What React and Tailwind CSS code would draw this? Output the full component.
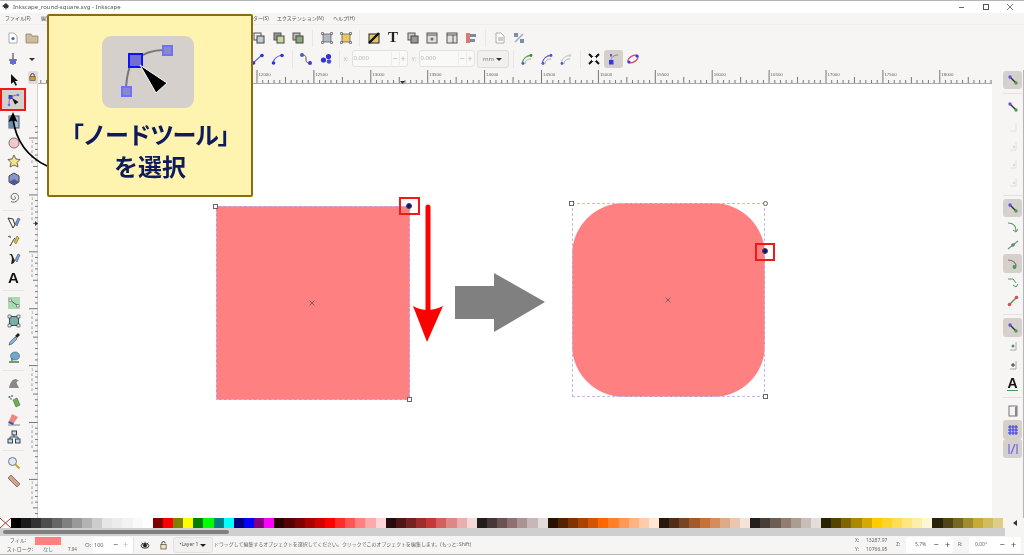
import React from "react";

const S = ({ children, vb = "0 0 14 14", size = "w-[14px] h-[14px]" }) => (
  <svg viewBox={vb} className={size}>{children}</svg>
);
const Snap = ({ a = "#5a5ae0", b = "#4a9a5a", l = "#333" }) => (
  <S>
    <path d="M4 4L10 10" stroke={l} strokeWidth="1.4" />
    <circle cx="4" cy="4" r="1.7" fill={a} />
    <circle cx="10" cy="10" r="1.7" fill={b} />
  </S>
);
const Page = ({ children }) => (
  <S>
    <path d="M3 2h5l3 3v7H3z" fill="#fff" stroke="#999" strokeWidth=".8" />
    {children}
  </S>
);
const Stack = ({ c = "#8a8a8a", d = "#d0d0c0" }) => (
  <S>
    <rect x="2" y="2" width="7" height="7" fill={d} stroke="#555" />
    <rect x="5" y="5" width="7" height="7" fill={c} stroke="#444" />
  </S>
);
const Bbox = ({ f = "#b0b8c0" }) => (
  <S>
    <rect x="3" y="3" width="8" height="8" fill={f} stroke="#555" strokeWidth=".7" />
    <path d="M1.5 1.5h2v2h-2zM10.5 1.5h2v2h-2zM1.5 10.5h2v2h-2zM10.5 10.5h2v2h-2z" fill="#fff" stroke="#444" strokeWidth=".6" />
  </S>
);
const NodeSeg = ({ curve }) => (
  <S>
    <path d={curve ? "M2 11C3 6 6 4 11 3" : "M2 11L11 3"} stroke="#5a6ac0" strokeWidth="1.2" fill="none" />
    <circle cx="2.5" cy="11" r="1.8" fill="#3030e0" />
    <circle cx="11" cy="3.5" r="1.8" fill="#3030e0" />
  </S>
);
const Path3 = ({ c = "#59a85a", e = "#3a8a3a" }) => (
  <S>
    <path d="M2 12C3 6 6 4 12 3" stroke={c} strokeWidth="1.3" fill="none" />
    <path d="M5 12C5 9 7 7 11 7" stroke="#aaa" strokeWidth="1" fill="none" />
    <circle cx="11" cy="3.5" r="1.4" fill={e} />
    <circle cx="3" cy="11.5" r="1.4" fill="#4a60d0" />
  </S>
);
const Faded = ({ plus }) => (
  <S>
    <path d="M10 3v8H4" stroke="#dde3de" strokeWidth="1" fill="none" />
    {plus && <circle cx="8" cy="8" r="1.2" fill="#cfe0d4" />}
  </S>
);

const Cell = ({ children, active }) => (
  <div className={`w-[19.5px] h-[18px] flex items-center justify-center rounded-[3px] ${active ? "bg-[#d5d0cc]" : ""}`}>{children}</div>
);
const Sep = ({ w }) => (
  <div className={`${w} h-[18px] flex justify-center`}><div className="w-px h-full bg-[#e8e7e5]" /></div>
);
const Spin = ({ value, w = "w-[56px]", light = true, numW = "w-[38px]" }) => (
  <div className={`${w} h-[17px] bg-[#f9f9f8] border border-[#e2e1df] rounded-[3px] flex items-center text-[6px] ${light ? "text-[#b8b8b8]" : "text-[#555]"}`}>
    <span className={`${numW} pl-[1px]`}>{value}</span>
    <span className="flex-1 text-center text-[9px] border-l border-[#ececea]">−</span>
    <span className="flex-1 text-center text-[9px] border-l border-[#ececea]">+</span>
  </div>
);

const gray = ["#000000","#1a1a1a","#333333","#4d4d4d","#666666","#808080","#999999","#b3b3b3","#cccccc","#e6e6e6","#ececec","#f2f2f2","#f9f9f9","#ffffff"];
const base = ["#800000","#ff0000","#808000","#ffff00","#008000","#00ff00","#008080","#00ffff","#000080","#0000ff","#800080","#ff00ff"];
const shades = ["#2b0000","#550000","#800000","#aa0000","#d40000","#ff0000","#ff2a2a","#ff5555","#ff8080","#ffaaaa","#ffd5d5","#280b0b","#501616","#782121","#a02c2c","#c83737","#d35f5f","#de8787","#e9afaf","#f4d7d7","#241c1c","#483737","#6c5353","#916f6f","#ac9393","#c8b7b7","#e3dbdb","#2b1100","#552200","#803300","#aa4400","#d45500","#ff6600","#ff7f2a","#ff9955","#ffb380","#ffccaa","#ffe6d5","#28170b","#502d16","#784421","#a05a2c","#c87137","#d38d5f","#deaa87","#e9c6af","#f4e3d7","#241f1c","#483e37","#6c5d53","#917c6f","#ac9d93","#c8beb7","#e3dedb","#2b2200","#554400","#806600","#aa8800","#d4aa00","#ffcc00","#ffd42a","#ffdd55","#ffe680","#ffeeaa","#fff6d5","#28220b","#504416","#786721","#a08d2c","#c8ab37","#d3bc5f","#decd87"];
const palette = [...gray, ...base, ...shades];

function HRuler() {
  const ticks = [];
  for (let k = -39; k <= 129; k++) {
    const x = 219 + k * 5.69;
    if (x < 0) continue;
    const maj = k % 10 === 0, mid = k % 5 === 0;
    ticks.push(<line key={k} x1={x} x2={x} y1={maj ? 0 : mid ? 7 : 10} y2="13" stroke="#555" strokeWidth=".8" />);
    if (maj) ticks.push(<text key={"t" + k} x={x + 1.5} y="6" fontSize="4.4" fill="#666" fontFamily="Liberation Sans, sans-serif">{12000 + k * 50}</text>);
  }
  return (
    <svg viewBox="0 0 954 14" className="w-[954px] h-[14px] block">
      {ticks}
      <line x1="0" x2="954" y1="13.5" y2="13.5" stroke="#aaa" strokeWidth="1" />
      <path d="M362 11h5l-2.5 3z" fill="#333" />
    </svg>
  );
}
function VRuler() {
  const ticks = [];
  for (let k = -2; k <= 66; k++) {
    const y = 54 + k * 5.69;
    const maj = k % 10 === 0, mid = k % 5 === 0;
    ticks.push(<line key={k} y1={y} y2={y} x1={maj ? 2 : mid ? 6 : 8} x2="11" stroke="#555" strokeWidth=".8" />);
    if (maj && y + 30 < 434) [0, 1, 2, 3, 4].forEach((i) =>
      ticks.push(<text key={"t" + k + i} x="4" y={y + 5 + i * 5} fontSize="4" fill="#888" fontFamily="Liberation Sans, sans-serif">{i === 0 ? "1" : "0"}</text>)
    );
  }
  return (
    <svg viewBox="0 0 11 434" className="w-[11px] h-[434px] block">
      {ticks}
      <line x1="11" x2="11" y1="0" y2="434" stroke="#aaa" strokeWidth="1" />
      <path d="M8 137v5l3-2.5z" fill="#333" />
    </svg>
  );
}

const leftTools = [
  ["h-[17px]", <S><path d="M4 1l7 7H8l2 4-1.5.7L6.5 9 4 11z" fill="#111" /></S>],
  ["node"],
  ["h-[22px]", <S><rect x="2" y="1" width="10" height="12" fill="#a9c1d6" stroke="#456" /><rect x="2" y="1" width="4" height="12" fill="#5f8fb5" /></S>],
  ["h-[19px]", <S><circle cx="7" cy="7" r="5" fill="#f7c6cc" stroke="#777" /></S>],
  ["h-[18px]", <S><path d="M7 1l2 4 4 .5-3 3 1 4.5-4-2-4 2 1-4.5-3-3L5 5z" fill="#f4e28a" stroke="#665" /></S>],
  ["h-[18px]", <S><path d="M7 1l5 3v6l-5 3-5-3V4z" fill="#8b96c8" stroke="#445" /><path d="M7 7l5 3-5 3-5-3z" fill="#4c5a9a" /></S>],
  ["h-[18px]", <S><path d="M7 7c.8-.8 2 .3 1.4 1.6-.8 1.5-3.6 1.2-4.2-.8C3.6 5 6 2.8 8.8 3.6c3 .9 3.6 4.6 1.6 6.8-1.6 1.8-4.2 2.2-6.4 1.2" fill="none" stroke="#666" strokeWidth="1" /></S>],
  ["sep"],
  ["h-[18px]", <S><path d="M1 2l5 1 2 6-2 3z" fill="none" stroke="#333" /><path d="M8 8l3-6 2 1-3 7z" fill="#6a9ad0" stroke="#345" strokeWidth=".5" /></S>],
  ["h-[18px]", <S><path d="M1 3c2-2 3 0 2 1" fill="none" stroke="#333" /><path d="M3 12c2-3 3-6 5-8" fill="none" stroke="#333" /><path d="M7 8l3-6 2 2-3 6z" fill="#e8b830" stroke="#553" strokeWidth=".5" /></S>],
  ["h-[18px]", <S><path d="M2 2c4 2 3 6 2 10 2 0 3-1 4-3L5 2z" fill="#222" /><path d="M8 8l3-6 2 1-3 7z" fill="#7aa0d0" stroke="#345" strokeWidth=".5" /></S>],
  ["h-[18px]", <span className="font-['Liberation_Sans'] font-bold text-[15px] leading-none text-[#111]">A</span>],
  ["sep"],
  ["h-[18px]", <S><rect x="1" y="1" width="12" height="12" fill="#a8dcb0" /><path d="M3 4l8 6" stroke="#555" /><rect x="2" y="3" width="2.5" height="2.5" fill="#fff" stroke="#555" strokeWidth=".5" /><rect x="9.5" y="8.5" width="2.5" height="2.5" fill="#fff" stroke="#555" strokeWidth=".5" /></S>],
  ["h-[18px]", <S><rect x="2.5" y="2.5" width="9" height="9" fill="#79b0a5" stroke="#355" /><path d="M1 1h3v3H1zM10 1h3v3h-3zM1 10h3v3H1zM10 10h3v3h-3z" fill="#eee" stroke="#333" strokeWidth=".6" /></S>],
  ["h-[18px]", <S><path d="M2 13l1-3 5-5 2 2-5 5z" fill="#8fb4d8" stroke="#345" strokeWidth=".6" /><path d="M8 4l3-3 2 2-3 3z" fill="#222" /></S>],
  ["h-[18px]", <S><ellipse cx="8" cy="6" rx="4.5" ry="4" fill="#6fa8d0" stroke="#456" strokeWidth=".6" /><path d="M2 12h10M5 8v3" stroke="#4a7a50" strokeWidth="1.4" /></S>],
  ["sep"],
  ["h-[18px]", <S><path d="M2 12c1-5 3-9 7-9l3 2c-2 0-3 1-2 3l2 4z" fill="#888" /></S>],
  ["h-[18px]", <S><path d="M6 6l4-2 3 7-4 2z" fill="#6bb04f" stroke="#354" strokeWidth=".5" /><circle cx="2.5" cy="3" r="1" fill="#557" /><circle cx="5" cy="2" r="1" fill="#77a" /><circle cx="4" cy="5" r="1" fill="#7a7" /></S>],
  ["h-[18px]", <S><path d="M5 2l6 3-4 6-5-2z" fill="#f0877c" /><path d="M2 9l5 2-1 2-5-2z" fill="#3a50d0" /><path d="M1 13h12" stroke="#333" strokeWidth=".6" /></S>],
  ["h-[18px]", <S><rect x="5" y="1" width="4.5" height="4" fill="#cfd6e4" stroke="#345" /><rect x="1" y="9" width="4.5" height="4" fill="#cfd6e4" stroke="#345" /><rect x="8.5" y="9" width="4.5" height="4" fill="#cfd6e4" stroke="#345" /><path d="M7 5v2M3 9V7h8v2" stroke="#345" fill="none" /></S>],
  ["sep"],
  ["h-[18px]", <S><circle cx="5.5" cy="5.5" r="4" fill="#dce8f2" stroke="#678" /><path d="M8.5 8.5l4 4" stroke="#d8a030" strokeWidth="2" /></S>],
  ["h-[18px]", <S><path d="M4 1l9 9-3 3-9-9z" fill="#d9a08f" stroke="#555" strokeWidth=".7" /></S>],
];

const rightTools = [
  ["h-[18px]", <Snap />, true],
  ["rsep"],
  ["h-[20px]", <Snap />],
  ["h-[19px]", <Faded />],
  ["h-[19px]", <Faded plus />],
  ["h-[18px]", <Faded plus />],
  ["h-[18px]", <Faded plus />],
  ["rsep2"],
  ["h-[18px]", <Snap />, true],
  ["h-[19px]", <S><path d="M2 3c5 0 8 3 8 8" stroke="#4a9a5a" fill="none" strokeWidth="1.2" /><path d="M7 10l3 2 2-3" fill="none" stroke="#4a9a5a" /></S>],
  ["h-[18px]", <S><path d="M2 11L12 3" stroke="#888" strokeWidth="1.2" /><circle cx="7" cy="7" r="1.8" fill="#4a9a5a" /></S>],
  ["h-[19px]", <S><path d="M2 3c5 0 8 3 8 6" stroke="#777" fill="none" strokeWidth="1.2" /><circle cx="8.5" cy="10" r="2" fill="#4a9a5a" /></S>, true],
  ["h-[19px]", <S><path d="M2 3h5l3 4M7 9l3 2 2-3" stroke="#4a9a5a" fill="none" /></S>],
  ["h-[18px]", <S><path d="M3 11L11 3" stroke="#6b8a5a" strokeWidth="1.4" /><circle cx="3.5" cy="10.5" r="1.8" fill="#d85050" /><circle cx="10.5" cy="3.5" r="1.8" fill="#d85050" /></S>],
  ["rsep3"],
  ["h-[19px]", <Snap />, true],
  ["h-[18px]", <S><path d="M10 3v8H4" stroke="#aaa" fill="none" /><circle cx="7" cy="7" r="1.5" fill="#4a9a5a" /></S>],
  ["h-[19px]", <S><path d="M10 3v8H4" stroke="#aaa" fill="none" /><path d="M5 7h4M7 5v4" stroke="#333" /></S>],
  ["h-[19px]", <span className="font-['Liberation_Sans'] font-bold text-[14px] leading-none text-[#111] border-b border-[#4a9a5a]">A</span>],
  ["rsep4"],
  ["h-[19px]", <S><rect x="3" y="2" width="8" height="10" fill="#f4f4f4" stroke="#777" /><rect x="9" y="3" width="2" height="9" fill="#888" /></S>],
  ["h-[19px]", <S><path d="M2 4h10M2 7h10M2 10h10M4 2v10M7 2v10M10 2v10" stroke="#3c3cf0" strokeWidth="1.1" /></S>, true],
  ["h-[19px]", <S><path d="M3 2v10M11 2v10" stroke="#6a6ae0" strokeWidth="1.2" /><path d="M5 12L9 2" stroke="#6a6ae0" strokeWidth="1.2" /></S>, true],
];

const Handle = ({ cls, round }) => (
  <div className={`absolute w-[5px] h-[5px] bg-white border border-[#666] ${round ? "rounded-full" : ""} ${cls}`} />
);
const Cross = ({ cls }) => (
  <svg viewBox="0 0 6 6" className={`absolute w-[6px] h-[6px] ${cls}`}><path d="M.5.5l5 5M5.5.5l-5 5" stroke="#555" strokeWidth=".8" /></svg>
);
const Dot = ({ cls }) => (
  <div className={`absolute w-[6px] h-[6px] rounded-full bg-[#10108a] border border-[#444] ${cls}`} />
);

export default function App() {
  return (
    <div className="relative w-[1024px] h-[555px] overflow-hidden bg-[#f6f5f4] font-['Noto_Sans','Noto_Sans_CJK_JP',sans-serif] blur-[0.4px] border-t border-[#b5b5b5] flex flex-col">
      {/* title bar */}
      <div className="h-[12px] bg-white flex items-center pl-[2px] text-[6px] text-[#555]">
        <svg viewBox="0 0 10 10" className="w-[8px] h-[8px] mr-[3px]"><path d="M5 0l4 4-1.5 1 .5 2-2-1-1 3-1-3-2 1 .5-2L0 4z" fill="#333" /></svg>
        <span>Inkscape_round-square.svg - Inkscape</span>
        <div className="ml-auto flex items-center text-[#444]">
          <span className="w-[5px] h-px bg-[#666] mr-[19px]" />
          <span className="w-[6px] h-[6px] border border-[#555] mr-[18px]" />
          <svg viewBox="0 0 6 6" className="w-[6px] h-[6px] mr-[11px]"><path d="M0 0l6 6M6 0L0 6" stroke="#555" strokeWidth=".8" /></svg>
        </div>
      </div>
      {/* menu */}
      <div className="h-[12px] flex items-center pl-[5px] text-[5px] text-[#555] border-b border-[#efeeec]">
        <span className="w-[36px]">ファイル(F)</span>
        <span className="w-[200px]">編集(E)</span>
        <span className="w-[36px] pl-[12px]">ター(S)</span>
        <span className="w-[56px]">エクステンション(N)</span>
        <span>ヘルプ(H)</span>
      </div>
      {/* toolbar 1 */}
      <div className="h-[25px] flex items-center pl-[3px] shrink-0">
        <Cell><Page><circle cx="7" cy="7.5" r="1.6" fill="#3a6ac0" /></Page></Cell>
        <Cell><S><path d="M1 3h5l1 2h6v7H1z" fill="#cdbb9f" stroke="#8a7a60" strokeWidth=".7" /></S></Cell>
        <div className="w-[207.5px]" />
        <Cell><Stack c="#bfcbd2" d="#eee" /></Cell>
        <Cell><Stack c="#c8d8a0" d="#999" /></Cell>
        <Cell><Stack c="#8aa878" d="#bbb" /></Cell>
        <Sep w="w-[8.75px]" />
        <Cell><Bbox /></Cell>
        <Cell><Bbox f="#e8c860" /></Cell>
        <Sep w="w-[8px]" />
        <Cell><S><rect x="2" y="3" width="10" height="9" fill="#e8c860" stroke="#222" /><path d="M2 12L12 2" stroke="#111" strokeWidth="2.4" /></S></Cell>
        <Cell><span className="font-['Liberation_Serif'] font-bold text-[15px] leading-none text-[#222]">T</span></Cell>
        <Cell><Stack c="#999" d="#ccc" /></Cell>
        <Cell><S><rect x="2" y="2" width="10" height="10" fill="#ddd" stroke="#555" /><path d="M2 4h10" stroke="#555" /><circle cx="7" cy="8" r="1.6" fill="#777" /></S></Cell>
        <Cell><S><rect x="2" y="2" width="10" height="10" fill="#e0e0e0" stroke="#555" /><path d="M2 4h10M8 4v8" stroke="#555" /></S></Cell>
        <Cell><S><rect x="2" y="2" width="4" height="10" fill="#d87a70" /><path d="M6 3h6v3H6zM6 8h5v3H6z" fill="#7a8a9a" /></S></Cell>
        <Sep w="w-[9px]" />
        <Cell><Page><rect x="5" y="6" width="5" height="4" fill="#ccc" /></Page></Cell>
        <Cell><S><path d="M3 11L11 3" stroke="#aaa" strokeWidth="1.4" /><rect x="2" y="2" width="4" height="4" fill="#7a8fb0" /><rect x="8" y="8" width="4" height="4" fill="#7a8fb0" /></S></Cell>
      </div>
      {/* toolbar 2 */}
      <div className="h-[20px] flex items-start pl-[3px] shrink-0">
        <Cell><S><path d="M7 1v12M3 8h8" stroke="#333" /><rect x="4" y="7" width="6" height="5" fill="#6a6ae0" /></S></Cell>
        <Cell><S><path d="M4 6h6l-3 3z" fill="#333" /></S></Cell>
        <div className="w-[206.5px]" />
        <Cell><NodeSeg /></Cell>
        <Cell><NodeSeg curve /></Cell>
        <Sep w="w-[9px]" />
        <Cell><S><path d="M4 3c6 0 0 8 6 8" stroke="#555" fill="none" /><circle cx="3" cy="3" r="2" fill="#4a5ac0" /><circle cx="11" cy="11" r="2" fill="#3a3ae0" /></S></Cell>
        <Cell><S><circle cx="4.5" cy="8" r="2.6" fill="#3030d8" /><circle cx="9.5" cy="4.5" r="2.6" fill="#3030d8" /><circle cx="10" cy="9.5" r="2.2" fill="#4848e0" /></S></Cell>
        <Sep w="w-[8px]" />
        <span className="w-[8px] leading-[18px] text-[6px] text-[#bbb]">X:</span>
        <Spin value="0.000" />
        <span className="w-[11px] pl-[4px] leading-[18px] text-[6px] text-[#bbb]">Y:</span>
        <Spin value="0.000" />
        <div className="ml-[2px] w-[32px] h-[18px] bg-[#f1f0ee] border border-[#dcdbd9] rounded-[3px] flex items-center justify-center gap-[2px] text-[6px] text-[#777]">
          mm<span className="w-0 h-0 border-x-[3px] border-x-transparent border-t-[3px] border-t-[#333]" />
        </div>
        <Sep w="w-[9px]" />
        <Cell><Path3 /></Cell>
        <Cell><Path3 c="#6a6ad8" e="#5050c8" /></Cell>
        <Cell><Path3 c="#ccd4cc" e="#ccd4cc" /></Cell>
        <Sep w="w-[8px]" />
        <Cell><S><path d="M2 2l10 10M12 2L2 12" stroke="#111" strokeWidth="2" /><rect x="5" y="5" width="4" height="4" fill="#fff" /></S></Cell>
        <Cell active><S><path d="M5 9c0-4 3-6 7-6" stroke="#888" fill="none" /><rect x="3" y="8" width="4.5" height="4.5" fill="#3838d8" /><rect x="4" y="2" width="2" height="2.5" fill="#5a5ad8" /></S></Cell>
        <Cell><S><ellipse cx="7" cy="7" rx="5.5" ry="3" transform="rotate(-30 7 7)" fill="none" stroke="#d84a70" strokeWidth="1.4" /><circle cx="3" cy="10" r="1.6" fill="#3a3ae0" /><circle cx="11" cy="4" r="1.6" fill="#3a3ae0" /></S></Cell>
      </div>
      {/* main */}
      <div className="h-[448px] flex shrink-0">
        <div className="w-[27px] pt-px flex flex-col shrink-0">
          {leftTools.map(([h, ic], i) =>
            h === "sep" ? (
              <div key={i} className="h-[8px] flex items-center px-[3px]"><div className="w-full h-px bg-[#e6e5e3]" /></div>
            ) : h === "node" ? (
              <div key={i} className="h-[23px] w-[26px] border-2 border-[#f01818] bg-[#d5d0cc] flex items-center justify-center">
                <S>
                  <path d="M5 4C7 3 9 2 12 2M4 5C3 8 3 10 3 12" stroke="#777" fill="none" />
                  <rect x="2.5" y="2" width="4" height="4" fill="#3a3ae8" />
                  <circle cx="12" cy="2" r="1.3" fill="#6a6af0" />
                  <circle cx="3" cy="12" r="1.3" fill="#6a6af0" />
                  <path d="M6 5l6.5 4-3.5 2.5z" fill="#111" />
                </S>
              </div>
            ) : (
              <div key={i} className={`${h} flex items-center justify-center`}>{ic}</div>
            )
          )}
        </div>
        <div className="w-[11px] shrink-0 flex flex-col">
          <div className="h-[14px] flex items-center justify-center">
            <div className="w-[10px] h-[13px] bg-[#dfdcd9] rounded-[2px] flex items-center justify-center">
              <svg viewBox="0 0 8 9" className="w-[7px] h-[8px]"><path d="M2 4V2.5a2 2 0 014 0V4" fill="none" stroke="#333" /><rect x="1" y="4" width="6" height="4.5" fill="#d8a020" stroke="#333" strokeWidth=".6" /></svg>
            </div>
          </div>
          <VRuler />
        </div>
        <div className="w-[954px] shrink-0 flex flex-col">
          <HRuler />
          {/* free canvas */}
          <div className="relative flex-1 bg-white">
            <div className="absolute left-[178px] top-[122px] w-[194px] h-[194px] bg-[#ff8080] border border-dashed border-[#c9b2e8]" />
            <Handle cls="left-[175px] top-[120px]" />
            <Handle cls="left-[369px] top-[313px]" />
            <Cross cls="left-[271px] top-[216px]" />
            <Dot cls="left-[368px] top-[119px]" />
            <div className="absolute left-[361px] top-[113px] w-[21px] h-[18px] border-2 border-[#f01818]" />
            <svg viewBox="0 0 140 150" className="absolute left-[372px] top-[118px] w-[140px] h-[150px]">
              <path d="M18 5V110" stroke="#ff0000" strokeWidth="5" strokeLinecap="round" />
              <path d="M3 104Q17 112 33 104L17 140z" fill="#ff0000" />
              <path d="M45 84H84V71L135 100 84 130V117H45z" fill="#808080" />
            </svg>
            <div className="absolute left-[534px] top-[119px] w-[193px] h-[194px] rounded-[52px] bg-[#ff8080]" />
            <div className="absolute left-[534px] top-[119px] w-[193px] h-[194px] border border-dashed border-[#bcbcee]" />
            <Handle cls="left-[531px] top-[117px]" />
            <Handle round cls="left-[725px] top-[117px]" />
            <Handle cls="left-[725px] top-[310px]" />
            <Cross cls="left-[627px] top-[213px]" />
            <Dot cls="left-[724px] top-[164px]" />
            <div className="absolute left-[717px] top-[159px] w-[20px] h-[18px] border-2 border-[#f01818]" />
          </div>
        </div>
        <div className="flex-1 flex flex-col items-end pt-[1px] pr-[1px] border-r border-[#b5b5b5]">
          {rightTools.map(([h, ic, act], i) =>
            h.startsWith("rsep") ? (
              <div key={i} className="w-[19px] h-[8px] flex items-center"><div className="w-full h-px bg-[#e2e1df]" /></div>
            ) : (
              <div key={i} className={`w-[19px] ${h} flex items-center justify-center rounded-[3px] ${act ? "bg-[#d5d0cc]" : ""}`}>{ic}</div>
            )
          )}
        </div>
      </div>
      {/* palette */}
      <div className="h-[10px] flex shrink-0">
        <div className="w-[11px] h-full bg-white">
          <svg viewBox="0 0 11 10" className="w-[11px] h-[10px] block"><path d="M0 0l11 10M11 0L0 10" stroke="#b03030" strokeWidth="1" /></svg>
        </div>
        {palette.map((c, i) => (
          <div key={i} className="w-[10.14px] h-full" style={{ backgroundColor: c }} />
        ))}
        <div className="ml-[10px] flex items-center"><span className="w-0 h-0 border-y-[3px] border-y-transparent border-r-[4px] border-r-[#333]" /></div>
      </div>
      {/* scrollbar */}
      <div className="h-[8px] w-[1005px] bg-[#cfcfcf] flex items-center pl-[3px] shrink-0">
        <div className="w-[226px] h-[4px] bg-[#808080] rounded-full" />
      </div>
      {/* status */}
      <div className="h-[19px] flex items-center text-[5px] text-[#666] border-b border-[#b5b5b5] shrink-0">
        <div className="w-[34px] flex flex-col items-end pr-[8px] leading-[9px] shrink-0">
          <span>フィル:</span>
          <span className="-mr-[7px] whitespace-nowrap">ストローク:</span>
        </div>
        <div className="w-[28px] flex flex-col items-center leading-[9px] shrink-0">
          <div className="w-[26px] h-[8px] bg-[#ff8080]" />
          <span>なし</span>
        </div>
        <span className="w-[23px] pt-[8px] pl-[6px] text-[4.5px] shrink-0">7.94</span>
        <span className="w-[8px] text-[6px] shrink-0">O:</span>
        <div className="w-[40px] h-[16px] bg-white rounded-[2px] flex items-center text-[5.5px] shrink-0">
          <span className="w-[20px] pl-[1px]">100</span>
          <span className="w-[10px] text-[9px] text-[#555]">−</span>
          <span className="w-[10px] text-[9px] text-[#bbb]">+</span>
        </div>
        <div className="w-px h-[16px] bg-[#e4e3e1] shrink-0" />
        <div className="w-[22px] flex justify-center shrink-0">
          <svg viewBox="0 0 12 10" className="w-[10px] h-[8px]"><ellipse cx="6" cy="6" rx="5" ry="3" fill="#ddd" stroke="#222" /><circle cx="6" cy="5.5" r="2.4" fill="#222" /><path d="M2 2l1 1.5M6 1v2M10 2L9 3.5" stroke="#222" /></svg>
        </div>
        <div className="w-[14px] flex justify-center shrink-0">
          <svg viewBox="0 0 8 10" className="w-[7px] h-[9px]"><path d="M2 4V2.5a2 2 0 014 0" fill="none" stroke="#333" /><rect x="1" y="4" width="6" height="5" fill="#f2e6b0" stroke="#333" strokeWidth=".7" /></svg>
        </div>
        <div className="ml-[3px] w-[40px] h-[16px] bg-[#f1f0ee] border border-[#e2e1df] rounded-[3px] flex items-center justify-center gap-[2px] text-[#555] shrink-0">
          <span className="whitespace-nowrap">•Layer 1</span>
          <span className="w-0 h-0 border-x-[3px] border-x-transparent border-t-[3px] border-t-[#222]" />
        </div>
        <span className="ml-[1px] w-[641px] whitespace-nowrap text-[4.95px] shrink-0">ドラッグして編集するオブジェクトを選択してください。クリックでこのオブジェクトを編集します。(もっと: Shift)</span>
        <div className="w-[41px] grid grid-cols-[11px_1fr] leading-[9px] shrink-0">
          <span>X:</span><span>13287.97</span>
          <span>Y:</span><span>10766.95</span>
        </div>
        <span className="w-[10px] shrink-0">Z:</span>
        <div className="w-[47px] h-[16px] bg-white rounded-[2px] flex items-center shrink-0">
          <span className="w-[24px] pl-[9px]">5.7%</span>
          <span className="w-[12px] text-center text-[9px] text-[#444]">−</span>
          <span className="w-[11px] text-center text-[9px] text-[#444]">+</span>
        </div>
        <span className="ml-[5px] w-[11px] shrink-0">R:</span>
        <div className="w-[52px] h-[16px] bg-white rounded-[2px] flex items-center shrink-0">
          <span className="w-[27px] pl-[6px]">0.00°</span>
          <span className="w-[12px] text-center text-[9px] text-[#444]">−</span>
          <span className="w-[11px] text-center text-[9px] text-[#444]">+</span>
        </div>
      </div>

      {/* curved arrow */}
      <svg viewBox="0 0 60 100" className="absolute left-0 top-[108px] w-[60px] h-[100px]">
        <path d="M47 57C28 48 16 32 13 10" fill="none" stroke="#000" strokeWidth="1.8" />
        <path d="M13 3L17.5 13Q13 10 8.5 13z" fill="#000" />
      </svg>

      {/* callout */}
      <div className="absolute left-[47px] top-[13px] w-[206px] h-[183px] bg-[#fff3b0] border-2 border-[#8c6d14] rounded-[2px] flex flex-col items-center pt-[20px]">
        <div className="w-[92px] h-[72px] mr-[4px] bg-[#d5d0cc] rounded-[9px]">
          <svg viewBox="0 0 92 72" className="w-[92px] h-[72px] block">
            <path d="M33 24Q45 14 62 14M28 30Q24 42 24 55" fill="none" stroke="#777" strokeWidth="2" />
            <rect x="27" y="18" width="13" height="13" fill="#7070d0" stroke="#1010ff" strokeWidth="2" />
            <rect x="61" y="10" width="9" height="9" fill="#8a8ac8" stroke="#7070ff" strokeWidth="2" />
            <rect x="20" y="51" width="9" height="9" fill="#8a8ac8" stroke="#7070ff" strokeWidth="2" />
            <path d="M38 29L65 47 54 57z" fill="#000" stroke="#fff" strokeWidth="1" />
          </svg>
        </div>
        <div className="mt-[10px] text-[24px] leading-[32px] font-bold text-[#0d1a5c] text-center font-['Noto_Sans_CJK_JP',sans-serif] whitespace-nowrap">
          <div className="tracking-[-1.5px]">「ノードツール」</div>
          <div>を選択</div>
        </div>
      </div>
    </div>
  );
}
